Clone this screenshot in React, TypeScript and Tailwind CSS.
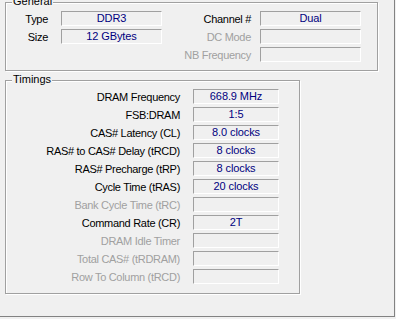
const generalRows = [
  { left: 'Type', leftValue: 'DDR3', right: 'Channel #', rightValue: 'Dual', rightOff: false },
  { left: 'Size', leftValue: '12 GBytes', right: 'DC Mode', rightValue: '', rightOff: true },
  { left: '', leftValue: null, right: 'NB Frequency', rightValue: '', rightOff: true },
]

const timings = [
  { label: 'DRAM Frequency', value: '668.9 MHz', off: false },
  { label: 'FSB:DRAM', value: '1:5', off: false },
  { label: 'CAS# Latency (CL)', value: '8.0 clocks', off: false },
  { label: 'RAS# to CAS# Delay (tRCD)', value: '8 clocks', off: false },
  { label: 'RAS# Precharge (tRP)', value: '8 clocks', off: false },
  { label: 'Cycle Time (tRAS)', value: '20 clocks', off: false },
  { label: 'Bank Cycle Time (tRC)', value: '', off: true },
  { label: 'Command Rate (CR)', value: '2T', off: false },
  { label: 'DRAM Idle Timer', value: '', off: true },
  { label: 'Total CAS# (tRDRAM)', value: '', off: true },
  { label: 'Row To Column (tRCD)', value: '', off: true },
]

// sunken read-only edit box, like the win32 one
function Field({ value, width }: { value: string; width: string }) {
  return (
    <div
      className={`${width} h-[15px] border border-t-[#a0a0a0] border-l-[#a0a0a0] border-b-white border-r-white flex items-center justify-center text-[#000080] leading-none tracking-[-0.1px]`}
    >
      {value}
    </div>
  )
}

function GroupTitle({ text }: { text: string }) {
  return (
    <span className="absolute left-[6px] -top-[8px] px-[1px] bg-[#f0f0f0] leading-[13px] text-black">{text}</span>
  )
}

export default function App() {
  return (
    <div
      className="w-[396px] h-[319px] bg-[#f0f0f0] overflow-hidden text-[11px]"
      style={{ fontFamily: '"Liberation Sans", Arial, sans-serif' }}
    >
      <div className="w-[395px] h-[317px] border-r border-b border-[#828282] pt-[2px] pl-[5px]">
        {/* General */}
        <div className="relative w-[373px] h-[69px] border border-[#a0a0a0] shadow-[inset_1px_1px_0_#fff,1px_1px_0_#fff] pt-[8px]">
          <GroupTitle text="General" />
          <div className="flex flex-col gap-[3px]">
            {generalRows.map((r, i) => (
              <div key={i} className="flex items-center h-[15px]">
                <span className="w-[42px] text-right text-black pt-[1px] tracking-[-0.3px]">{r.left}</span>
                <div className="ml-[13px] w-[101px]">
                  {r.leftValue !== null && <Field value={r.leftValue} width="w-[101px]" />}
                </div>
                <span
                  className={`w-[89px] text-right pt-[1px] tracking-[-0.3px] ${r.rightOff ? 'text-[#a0a0a0]' : 'text-black'}`}
                >
                  {r.right}
                </span>
                <div className="ml-[9px]">
                  <Field value={r.rightValue} width="w-[101px]" />
                </div>
              </div>
            ))}
          </div>
        </div>

        {/* Timings */}
        <div className="relative mt-[9px] w-[295px] h-[214px] border border-[#a0a0a0] shadow-[inset_1px_1px_0_#fff,1px_1px_0_#fff] pt-[8px]">
          <GroupTitle text="Timings" />
          <div className="flex flex-col gap-[3px]">
            {timings.map((t) => (
              <div key={t.label} className="flex items-center h-[15px]">
                <span
                  className={`w-[174px] text-right whitespace-nowrap pt-[1px] tracking-[-0.3px] ${t.off ? 'text-[#a0a0a0]' : 'text-black'}`}
                >
                  {t.label}
                </span>
                <div className="ml-[13px]">
                  <Field value={t.value} width="w-[86px]" />
                </div>
              </div>
            ))}
          </div>
        </div>
      </div>
    </div>
  )
}
